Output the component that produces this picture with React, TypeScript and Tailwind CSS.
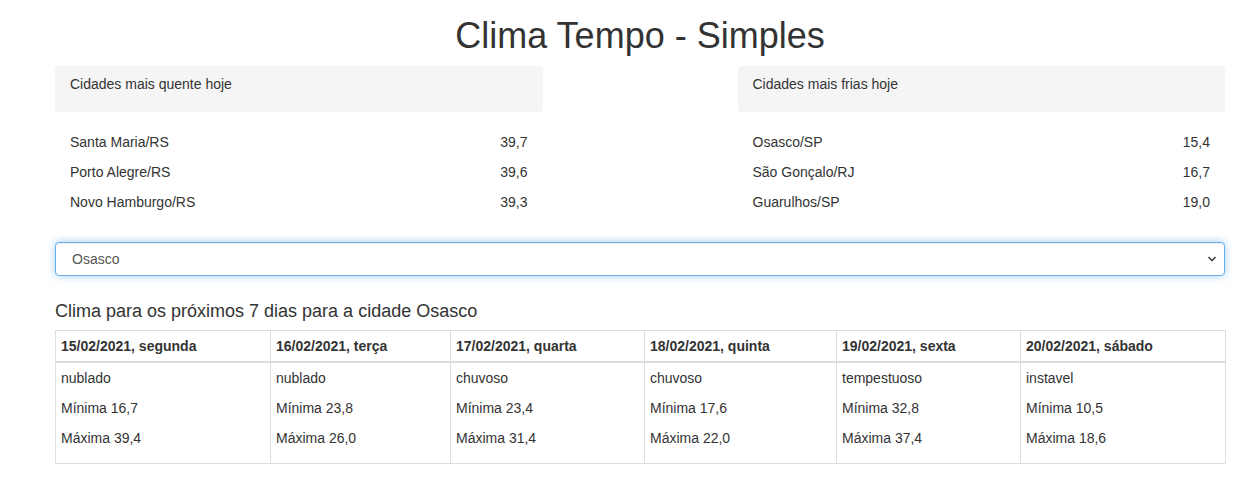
import React, { useState } from 'react';

const quentes = [
  { cidade: 'Santa Maria/RS', temp: '39,7' },
  { cidade: 'Porto Alegre/RS', temp: '39,6' },
  { cidade: 'Novo Hamburgo/RS', temp: '39,3' },
];

const frias = [
  { cidade: 'Osasco/SP', temp: '15,4' },
  { cidade: 'São Gonçalo/RJ', temp: '16,7' },
  { cidade: 'Guarulhos/SP', temp: '19,0' },
];

const previsao = [
  { dia: '15/02/2021, segunda', clima: 'nublado', min: '16,7', max: '39,4', w: 'w-[215px]' },
  { dia: '16/02/2021, terça', clima: 'nublado', min: '23,8', max: '26,0', w: 'w-[180px]' },
  { dia: '17/02/2021, quarta', clima: 'chuvoso', min: '23,4', max: '31,4', w: 'w-[194px]' },
  { dia: '18/02/2021, quinta', clima: 'chuvoso', min: '17,6', max: '22,0', w: 'w-[192px]' },
  { dia: '19/02/2021, sexta', clima: 'tempestuoso', min: '32,8', max: '37,4', w: 'w-[184px]' },
  { dia: '20/02/2021, sábado', clima: 'instavel', min: '10,5', max: '18,6', w: 'w-[205px]' },
];

const ListaCidades: React.FC<{ titulo: string; itens: { cidade: string; temp: string }[]; className?: string }> = ({ titulo, itens, className }) => (
  <div className={className}>
    <div className="bg-[#f5f5f5] rounded-[4px] h-[46px] px-[15px] pt-[8px]">{titulo}</div>
    <ul className="mt-[15px]">
      {itens.map((i) => (
        <li key={i.cidade} className="h-[30px] flex items-center justify-between pl-[15px] pr-[15px]">
          <span>{i.cidade}</span>
          <span>{i.temp}</span>
        </li>
      ))}
    </ul>
  </div>
);

const App: React.FC = () => {
  const [cidade, setCidade] = useState('Osasco');

  return (
    <div className="min-h-screen bg-white pl-[55px] pr-[25px] text-[14px] leading-[20px] text-[#333] font-['Liberation_Sans',Arial,sans-serif]">
      <h1 className="text-center text-[36px] leading-[40px] pt-[16px] mb-[10px] font-normal">Clima Tempo - Simples</h1>

      <div className="grid grid-cols-12">
        <ListaCidades titulo="Cidades mais quente hoje" itens={quentes} className="col-span-5" />
        <ListaCidades titulo="Cidades mais frias hoje" itens={frias} className="col-start-8 col-span-5" />
      </div>

      <div className="relative mt-[25px]">
        <select
          value={cidade}
          onChange={(e) => setCidade(e.target.value)}
          className="appearance-none w-full h-[34px] pl-[16px] pr-[30px] bg-white text-[#555] text-[14px] border border-[#66afe9] rounded-[4px] outline-none shadow-[inset_0_1px_1px_rgba(0,0,0,.075),0_0_8px_rgba(102,175,233,.6)]"
        >
          <option>Osasco</option>
          <option>São Paulo</option>
          <option>Guarulhos</option>
        </select>
        <svg className="absolute right-[8px] top-[13px] pointer-events-none" width="10" height="8" viewBox="0 0 10 8">
          <polyline points="1.5,2 5,5.5 8.5,2" fill="none" stroke="#444" strokeWidth="1.6" />
        </svg>
      </div>

      <h3 className="mt-[25px] mb-[9px] text-[18px] leading-[20px] font-normal">
        Clima para os próximos 7 dias para a cidade {cidade}
      </h3>

      <table className="w-full table-fixed border-collapse border border-[#ddd]">
        <thead>
          <tr>
            {previsao.map((p) => (
              <th key={p.dia} className={`${p.w} text-left font-bold px-[5px] py-[5px] border border-[#ddd] border-b-2`}>
                {p.dia}
              </th>
            ))}
          </tr>
        </thead>
        <tbody>
          <tr>
            {previsao.map((p) => (
              <td key={p.dia} className="align-top px-[5px] py-[5px] border border-[#ddd]">
                <p className="mb-[10px]">{p.clima}</p>
                <p className="mb-[10px]">Mínima {p.min}</p>
                <p className="mb-[10px]">Máxima {p.max}</p>
              </td>
            ))}
          </tr>
        </tbody>
      </table>
    </div>
  );
};

export default App;
